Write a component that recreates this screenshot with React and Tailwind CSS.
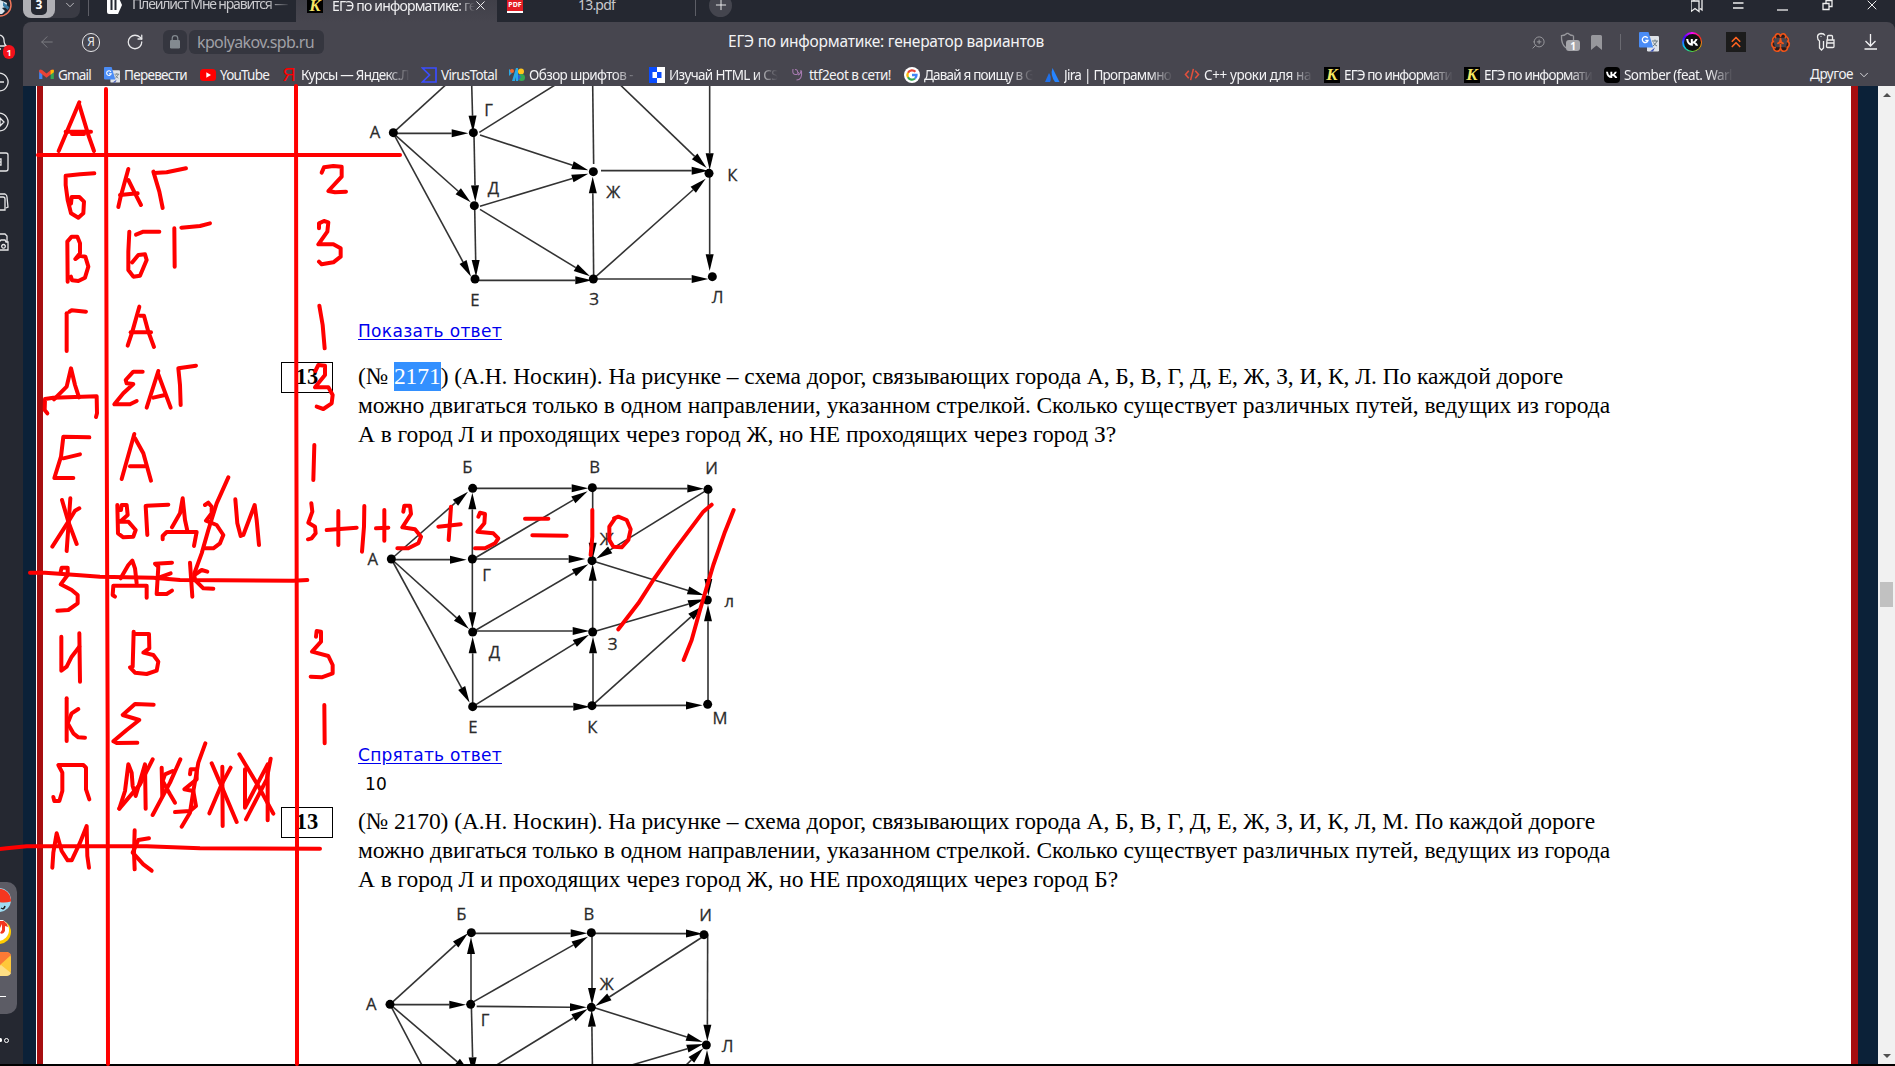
import React, { useLayoutEffect, useRef, useState } from "react";
import { ArrowLeft, RotateCw, ChevronDown, ZoomIn, Bookmark, Brain, ChevronsUp, X, Plus } from "lucide-react";

/* Inline text whose tracking is adjusted so that it spans w pixels. */
function Fit({ w, className = "", children }) {
  const ref = useRef(null);
  const [ls, setLs] = useState(0);
  useLayoutEffect(() => {
    const n = ref.current.textContent.length;
    setLs((w - ref.current.getBoundingClientRect().width) / n);
  }, [w]);
  return (
    <span ref={ref} className={"inline-block whitespace-pre " + className} style={{ letterSpacing: ls + "px" }}>
      {children}
    </span>
  );
}

/* ---------- icons ---------- */
const KIcon = () => (
  <span className="flex h-4 w-4 shrink-0 items-center justify-center bg-black font-['Liberation_Serif',serif] text-[17px] leading-none font-bold text-[#f5e663] italic">
    K
  </span>
);
const Gmail = () => (
  <svg viewBox="0 0 16 12" className="h-[11px] w-[15px]">
    <path d="M0 1.5V11h3.5V5z" fill="#4285f4" />
    <path d="M16 1.5V11h-3.5V5z" fill="#34a853" />
    <path d="M0 1.2Q1 0 3.2 1L8 5l4.800-4Q15 0 16 1.200L16 3.400 8 9.500 0 3.400z" fill="#ea4335" />
    <path d="M12.500 1.200L16 .8V3.600l-3.500 2.600z" fill="#fbbc04" />
  </svg>
);
const Translate = ({ className = "h-4 w-4" }) => (
  <svg viewBox="0 0 20 20" className={className}>
    <rect x="8" y="4" width="12" height="15.5" rx="1.2" fill="#dfe3e8" />
    <path d="M11 19.5h3l2-4z" fill="#3a50b8" />
    <path d="M1 0h8.500l4.700 15.500H1q-1 0-1-1V1q0-1 1-1z" fill="#4a8cf5" />
    <path d="M8.700 6.100A2.900 2.900 0 1 0 9 8.500H6.300" fill="none" stroke="#fff" strokeWidth="1.300" />
    <path d="M13 9h6M16 7.500V9M18 9q-1 3-4 5M14.500 10.500q1 2.500 3.500 3.500" fill="none" stroke="#6b7a80" />
  </svg>
);
const YouTube = () => (
  <svg viewBox="0 0 16 12" className="h-3 w-4">
    <rect width="16" height="12" rx="3.500" fill="#f00" />
    <path d="M6.300 3.300v5.400L11 6z" fill="#fff" />
  </svg>
);
const Virus = () => (
  <svg viewBox="0 0 16 16" className="h-4 w-4" fill="none" stroke="#3b4dff" strokeWidth="1.700">
    <path d="M1.500 1h13.500v14H1.500L8.500 8z" />
  </svg>
);
const Fonts = () => (
  <svg viewBox="0 0 16 13" className="h-[13px] w-4">
    <path d="M0 1l4 3-4 4zM3 13L7 0h2v13H7V9l-1 4z" fill="#29a9e8" />
    <circle cx="3" cy="3" r="2" fill="#f4682e" />
    <circle cx="12" cy="3.500" r="3" fill="#ffc51e" />
    <circle cx="12.500" cy="9.500" r="3.500" fill="#34a853" />
    <path d="M9 6l3 3-3 4z" fill="#2c62d8" />
  </svg>
);
const Stepik = () => (
  <svg viewBox="0 0 16 16" className="h-4 w-4">
    <rect width="8" height="16" fill="#0b4dff" />
    <rect x="8" width="8" height="16" fill="#fff" />
    <rect x="3.500" y="5" width="4.500" height="6" fill="#fff" />
    <rect x="8" y="5" width="4.500" height="6" fill="#0b4dff" />
  </svg>
);
const Ttf = () => (
  <svg viewBox="0 0 16 16" className="h-4 w-4" fill="none" stroke="#a77ab0" strokeWidth="1.100">
    <path d="M4 2Q3 7 6 7.500T9.500 5M6 2.500q3 0 2.500 3M9 8q3-1 3-5M12.500 4q1 9-5 9" />
  </svg>
);
const Google = () => (
  <svg viewBox="0 0 16 16" className="h-4 w-4">
    <circle cx="8" cy="8" r="8" fill="#fff" />
    <g fill="none" strokeWidth="2.300">
      <path d="M11.400 4.800A4.600 4.600 0 0 0 4 5.700" stroke="#ea4335" />
      <path d="M4 5.700a4.600 4.600 0 0 0 0 4.600" stroke="#fbbc04" />
      <path d="M4 10.300a4.600 4.600 0 0 0 7 1.200" stroke="#34a853" />
      <path d="M11 11.500A4.600 4.600 0 0 0 12.500 8H8" stroke="#4285f4" />
    </g>
  </svg>
);
const Jira = () => (
  <svg viewBox="0 0 16 14" className="h-[14px] w-4">
    <path d="M5 5q3 4 1 9H1z" fill="#2070e8" />
    <path d="M8.500 0L15.500 14H11Q6 7 8.500 0z" fill="#2684ff" />
  </svg>
);
const Code = () => (
  <svg viewBox="0 0 16 14" className="h-[13px] w-4" fill="none" stroke="#e2503c" strokeWidth="1.700">
    <path d="M4.500 3L1 7l3.500 4M11.500 3L15 7l-3.500 4M9.500 1l-3 12" />
  </svg>
);
const VkMark = ({ className }) => (
  <svg viewBox="0 0 16 16" className={className}>
    <path d="M2 4.800h2q.3 3.600 2.400 4V4.800h1.900v2.400q1.800-.3 2.500-2.400h2q-.5 2-2.200 3 1.900.9 2.700 3.300h-2.200q-.8-2-2.800-2.300v2.300Q3 11.500 2 4.800z" fill="#fff" />
  </svg>
);
const Vk = () => (
  <span className="flex h-4 w-4 rounded bg-black">
    <VkMark className="h-4 w-4" />
  </span>
);

const BOOKMARKS = [
  { icon: <Gmail />, t: "Gmail", w: 33, box: "w-[66px]" },
  { icon: <Translate />, t: "Перевести", w: 63, box: "w-[96px]" },
  { icon: <YouTube />, t: "YouTube", w: 49, box: "w-[81px]" },
  { icon: <span className="w-4 text-center font-['Liberation_Sans',sans-serif] text-[18px] leading-4 text-[#f00]">Я</span>, t: "Курсы — Яндекс.Л", w: 108, box: "w-[140px]", fade: true },
  { icon: <Virus />, t: "VirusTotal", w: 56, box: "w-[88px]" },
  { icon: <Fonts />, t: "Обзор шрифтов -", w: 104, box: "w-[140px]", fade: true },
  { icon: <Stepik />, t: "Изучай HTML и CS", w: 109, box: "w-[140px]", fade: true },
  { icon: <Ttf />, t: "ttf2eot в сети!", w: 82, box: "w-[115px]" },
  { icon: <Google />, t: "Давай я поищу в G", w: 110, box: "w-[140px]", fade: true },
  { icon: <Jira />, t: "Jira | Программно", w: 107, box: "w-[140px]", fade: true },
  { icon: <Code />, t: "C++ уроки для на", w: 107, box: "w-[140px]", fade: true },
  { icon: <KIcon />, t: "ЕГЭ по информати", w: 108, box: "w-[140px]", fade: true },
  { icon: <KIcon />, t: "ЕГЭ по информати", w: 108, box: "w-[140px]", fade: true },
  { icon: <Vk />, t: "Somber (feat. Warl", w: 108, box: "w-[140px]", fade: true },
];

function TabStrip() {
  return (
    <div className="h-[22px] overflow-hidden bg-[#252831]">
      <div className="-mt-[13px] flex h-9 items-center text-[13px] text-[#c9c9cd]">
        <div className="flex h-[26px] w-[57px] items-center rounded-lg bg-[#3a3b44]">
          <div className="flex h-full w-8 items-center justify-center rounded-lg bg-[#b0b0b5]">
            <span className="flex h-5 w-4 items-center justify-center rounded-[5px] bg-[#252831] text-[12px] leading-none font-bold text-white">3</span>
          </div>
          <ChevronDown className="ml-2 h-3.5 w-3.5" strokeWidth={1.5} />
        </div>
        <div className="ml-2 h-[22px] w-px bg-[#5d5e66]" />
        <svg viewBox="0 0 16 18" className="ml-[18px] h-[18px] w-4">
          <path d="M2 0h9l4 9-4 9H2Q0 18 0 16V2Q0 0 2 0z" fill="#fff" />
          <path d="M4.500 3v11M8.500 3v11" stroke="#252831" strokeWidth="2" />
        </svg>
        <div className="ml-[9px] w-[164px] overflow-hidden [mask-image:linear-gradient(90deg,#000_82%,transparent_97%)]">
          <Fit w={155} className="text-[14px] leading-4">Плейлист Мне нравится —</Fit>
        </div>
        <div className="flex h-9 w-[201px] items-center bg-linear-to-b from-[#3c3c45] to-[#47464f] pl-[11px] text-[14px] text-[#f0f0f2]">
          <KIcon />
          <div className="ml-[9px] w-[143px] overflow-hidden [mask-image:linear-gradient(90deg,#000_88%,transparent_100%)]">
            <Fit w={144} className="leading-4">ЕГЭ по информатике: ге</Fit>
          </div>
          <X className="-ml-0.5 h-[15px] w-[15px]" strokeWidth={1.6} />
        </div>
        <span className="ml-[10px] flex h-4 w-4 items-center justify-center border-b-2 border-white bg-[#e31b23] text-[7px] leading-none font-bold text-white">PDF</span>
        <Fit w={37} className="ml-[55px] text-[14px] leading-4">13.pdf</Fit>
        <div className="ml-[80px] h-[22px] w-px bg-[#5d5e66]" />
        <span className="ml-[13px] flex h-[23px] w-[23px] items-center justify-center rounded-full bg-[#44454e] text-white">
          <Plus className="h-4 w-4" strokeWidth={1.3} />
        </span>
        <div className="ml-auto flex items-center pr-[15px] text-[#eee]">
          <svg viewBox="0 0 16 16" className="mr-[27px] h-4 w-4" fill="none" stroke="currentColor" strokeWidth="1.300">
            <path d="M-1 4h8v10.500L3 11.500l-4 3zM2 4V2h8v11l-2-1.500" transform="translate(1 0)" />
          </svg>
          <svg viewBox="0 0 16 16" className="mr-[28px] h-4 w-4 -translate-x-1" fill="none" stroke="currentColor" strokeWidth="1.300">
            <path d="M3 6h10.500M3 11h10.500" />
          </svg>
          <svg viewBox="0 0 16 16" className="mr-[28px] h-4 w-4 -translate-x-1" fill="none" stroke="currentColor" strokeWidth="1.300">
            <path d="M3 13h11" />
          </svg>
          <svg viewBox="0 0 16 16" className="mr-[26px] h-4 w-4 -translate-x-0.5" fill="none" stroke="currentColor" strokeWidth="1.300">
            <path d="M3 6.500h6v6H3zM6 6.500V3.500h6v6H9" />
          </svg>
          <X className="h-4 w-4" strokeWidth={1.5} />
        </div>
      </div>
    </div>
  );
}

function AddressBar() {
  return (
    <div className="grid h-10 grid-cols-[1fr_auto_1fr] items-center">
      <div className="flex items-center pl-[15px]">
        <ArrowLeft className="h-[18px] w-[18px] text-[#7b7b82]" strokeWidth={1.3} />
        <span className="ml-[26px] flex h-[19px] w-[18px] items-center justify-center rounded-full border-[1.5px] border-[#e8e8ea] text-[12px] leading-none text-[#e8e8ea]">Я</span>
        <RotateCw className="ml-[26px] h-[18px] w-[18px] text-[#e8e8ea]" strokeWidth={1.7} />
        <span className="ml-[19px] flex h-6 w-6 items-center justify-center rounded-md bg-[#35363f]">
          <svg viewBox="0 0 10 14" className="h-[14px] w-[10px]">
            <rect y="5" width="10" height="8.500" rx="1.200" fill="#838a90" />
            <path d="M2.200 6V3.500a2.800 2.800 0 0 1 5.600 0V6" fill="none" stroke="#838a90" strokeWidth="1.200" />
          </svg>
        </span>
        <span className="ml-0.5 flex h-6 w-[135px] items-center rounded-md bg-[#35363f] pl-2 text-[16px] text-[#a0a0a6]">
          <Fit w={117}>kpolyakov.spb.ru</Fit>
        </span>
      </div>
      <div className="-ml-[146px] text-[15.500px] text-[#f3f3f5]">
        <Fit w={316}>ЕГЭ по информатике: генератор вариантов</Fit>
      </div>
      <div className="flex items-center justify-end pr-[15px] text-[#97979c]">
        <ZoomIn className="mr-[14px] h-[15px] w-[15px] -scale-x-100" strokeWidth={1.6} />
        <span className="relative mr-[11px] flex h-5 w-5 items-start">
          <svg viewBox="0 0 16 20" className="h-5 w-4" fill="none" stroke="currentColor" strokeWidth="1.300">
            <path d="M7.500 1Q10 3.500 13.500 3.700M7.500 1Q5 3.500 1.500 3.700 1 12 6 16M13.500 3.700v5" />
          </svg>
          <span className="absolute top-[8px] left-[6px] flex h-[11px] w-[14px] items-center justify-center rounded-[3px] bg-[#a5a5aa] text-[10px] leading-none font-bold text-white">1</span>
        </span>
        <svg viewBox="0 0 11 15" className="mr-px h-[15px] w-[11px]">
          <path d="M1.500 0h8Q11 0 11 1.500V15L5.500 10.500 0 15V1.500Q0 0 1.500 0z" fill="#97979c" />
        </svg>
        <span className="ml-[17px] h-4 w-px bg-[#6a6a71]" />
        <Translate className="ml-[18px] h-5 w-5" />
        <span className="ml-[23px] h-[20px] w-[20px] rounded-full bg-[conic-gradient(#f0f,#f22,#fb0,#4d4,#0cf,#40f,#f0f)] p-[1.5px]">
          <span className="flex h-full w-full rounded-full bg-[#111]">
            <VkMark className="h-[17px] w-[17px]" />
          </span>
        </span>
        <span className="ml-6 flex h-5 w-5 items-center justify-center bg-[#1c1c1c]">
          <ChevronsUp className="h-[18px] w-[18px] text-[#ff6320]" strokeWidth={2.2} />
        </span>
        <Brain className="ml-6 h-[21px] w-[21px] fill-[#2a1a18] text-[#f0551a]" strokeWidth={1.9} />
        <svg viewBox="0 0 20 20" className="ml-[25px] h-5 w-5 text-[#eee]" fill="none" stroke="currentColor" strokeWidth="1.300">
          <path d="M9 3.500Q8 1.500 5 1.500 1.500 2 1.500 5t2 4v7l2 2 2-2V9M5 4.200v.8M11 8h7v6.500q0 1-1 1h-5.500q-1 0-1-1zM11.500 8V4.500q0-1 1-1h3q1 0 1 1V8M10.500 11h7.500" />
        </svg>
        <svg viewBox="0 0 14 16" className="ml-[28px] mr-0.5 h-4 w-[14px] text-[#f3f3f5]" fill="none" stroke="currentColor" strokeWidth="1.300">
          <path d="M6.500 0v11.500M1.500 7l5 5 5-5M.5 15h12.500" />
        </svg>
      </div>
    </div>
  );
}

function Bookmarks() {
  return (
    <div className="flex h-6 items-center pt-px pl-[15px] text-[13.500px] text-[#f3f3f5]">
      {BOOKMARKS.map((b, i) => (
        <div key={i} className={"flex shrink-0 items-center " + b.box}>
          <span className="flex w-4 shrink-0 justify-center">{b.icon}</span>
          <div className={"ml-1 leading-5 " + (b.fade ? "w-[109px] overflow-hidden [mask-image:linear-gradient(90deg,#000_78%,transparent_100%)]" : "")}>
            <Fit w={b.w}>{b.t}</Fit>
          </div>
        </div>
      ))}
      <div className="ml-auto flex items-center pr-[24px]">
        <Fit w={43}>Другое</Fit>
        <ChevronDown className="ml-1 h-[14px] w-[14px]" strokeWidth={1.4} />
      </div>
    </div>
  );
}

/* ---------- left browser rail ---------- */
const RAIL = [
  "M3 14Q5 13 5 8a5 5 0 0 1 10 0q0 5 3 6zM8 17h4",
  "M10 1a9 9 0 1 0 .01 0M6 10h9",
  "M10 1a9 9 0 1 0 .01 0M11 6l4 4-4 4z",
  "M2 1h15q2 0 2 2v14q0 2-2 2H2M9 7h3v6H9M12 10H9",
  "M3 5h11q2 0 2 2v11H3M5 2l11 0q2 1 2 3l1 10-2 1",
  "M2 2h14l2 2v6M8 9h3l1-1h4l1 2h2v8H8M14.500 12.500a1.800 1.800 0 1 0 .01 0",
];
function Rail() {
  return (
    <aside className="flex w-[23px] shrink-0 flex-col overflow-hidden bg-[#252831]">
      <svg viewBox="0 0 24 24" className="-mt-[7px] -ml-3 h-6 w-6">
        <circle cx="12" cy="12" r="11" fill="#1d2733" stroke="#f2765a" strokeWidth="1.500" />
        <path d="M12 7l7 3-1 4-4 1 3 3-3 3h-3z" fill="#d9e6ee" />
        <path d="M15 9l6 5-1 3-5-4z" fill="#3d7fa8" />
      </svg>
      <div className="mt-[15px] -ml-[11px] flex flex-col gap-5">
        {RAIL.map((d, i) => (
          <span key={i} className="relative h-5 w-5">
            <svg viewBox="0 0 20 20" className="h-5 w-5" fill="none" stroke="#e6e6e8" strokeWidth="1.300">
              <path d={d} />
            </svg>
            {i === 0 && (
              <span className="absolute top-[13px] left-[14px] flex h-[14px] w-[12px] items-center justify-center rounded-full bg-[#f4111b] text-[9px] leading-none font-bold text-white">1</span>
            )}
          </span>
        ))}
      </div>
      <div className="mt-auto h-[132px] w-[17px] overflow-hidden rounded-r-[10px] bg-[#5c5c65] pt-1.5">
        <div className="-ml-[13px] flex w-6 flex-col items-center gap-2">
          <svg viewBox="0 0 24 24" className="h-6 w-6">
            <circle cx="12" cy="12" r="12" fill="#9fdcf2" />
            <path d="M0 12A12 12 0 0 1 24 13.500Q18 15 12 14z" fill="#f5371f" />
            <path d="M14 20q3 2 4-2" stroke="#222" strokeWidth="1.500" fill="none" />
          </svg>
          <svg viewBox="0 0 24 24" className="h-6 w-6">
            <circle cx="12" cy="12" r="12" fill="#ffcc00" />
            <circle cx="11" cy="10" r="11" fill="#fff" />
            <path d="M8 1h9l3 3 1 3-3-1v5q-2 4-5 2l2-3V4l-2 4z" fill="#f5371f" />
          </svg>
          <svg viewBox="0 0 24 24" className="h-6 w-6">
            <rect width="24" height="24" rx="5" fill="#ffc83a" />
            <path d="M0 0h19q4 0 5 3L12 14 0 6z" fill="#fb7a35" />
            <path d="M14 13l10 8q-1 3-5 3H0z" fill="#ffdf85" />
          </svg>
          <span className="mt-[12px] mr-[5px] h-px w-3 self-end bg-white" />
        </div>
      </div>
      <div className="mt-[23px] mb-[21px] flex h-[6px] items-center gap-0.5 pl-px">
        <span className="-ml-0.5 h-[4px] w-[3px] rounded-full bg-white" />
        <span className="h-[5px] w-[5px] rounded-full border border-white" />
      </div>
    </aside>
  );
}

/* ---------- road graphs; figure units are thirds of a pixel ---------- */
function Edge({ x1, y1, x2, y2, plain }) {
  const len = Math.hypot(x2 - x1, y2 - y1);
  const ux = (x2 - x1) / len;
  const uy = (y2 - y1) / len;
  const bx = x2 - ux * 50;
  const by = y2 - uy * 50;
  return (
    <g>
      <line x1={x1} y1={y1} x2={plain ? x2 : bx} y2={plain ? y2 : by} stroke="#333" strokeWidth="4.8" />
      {!plain && <polygon points={`${x2},${y2} ${bx - uy * 12},${by + ux * 12} ${bx + uy * 12},${by - ux * 12}`} fill="#000" />}
    </g>
  );
}
function Graph({ viewBox, className, nodes, edges, labels }) {
  return (
    <svg viewBox={viewBox} className={"block w-[402px] " + className}>
      {edges.map(([x1, y1, x2, y2, plain], i) => (
        <Edge key={i} x1={x1} y1={y1} x2={x2} y2={y2} plain={plain} />
      ))}
      {nodes.map(([x, y], i) => (
        <circle key={i} cx={x} cy={y} r="13.5" fill="#000" />
      ))}
      {labels.map(([t, x, y], i) => (
        <text key={i} x={x} y={y} textAnchor="middle" fill="#2b2b2b" stroke="#2b2b2b" strokeWidth="0.8" className="font-['Open_Sans',sans-serif] text-[50px]">
          {t}
        </text>
      ))}
    </svg>
  );
}
const G1 = {
  nodes: [[160, 158], [400, 158], [403, 377], [405, 597], [760, 597], [760, 275], [1107, 280], [1117, 590]],
  edges: [
    [160, 158, 320, 12, 1], [395, 10, 399, 157], [160, 160, 385, 160], [160, 160, 392, 367], [160, 160, 393, 590], [402, 165, 406, 366],
    [404, 380, 408, 590], [418, 157, 650, 12, 1], [420, 165, 745, 271], [420, 379, 745, 281], [420, 388, 750, 589], [415, 601, 756, 601],
    [761, 590, 758, 290], [758, 10, 761, 252, 1], [783, 272, 1105, 272], [838, 12, 1100, 264], [1109, 10, 1109, 270], [1109, 285, 1109, 573],
    [765, 592, 1097, 296], [770, 597, 1105, 597],
  ],
  labels: [["А", 105, 175], ["Г", 446, 107], ["Д", 460, 342], ["Ж", 820, 353], ["К", 1177, 302], ["Е", 405, 677], ["З", 762, 674], ["Л", 1133, 668]],
};
const G2 = {
  nodes: [[154, 357], [398, 145], [757, 143], [1104, 148], [397, 357], [756, 362], [398, 576], [758, 576], [1102, 480], [398, 800], [756, 797], [1103, 793]],
  edges: [
    [154, 357, 384, 155], [154, 359, 380, 359], [154, 357, 387, 567], [154, 357, 389, 788], [398, 145, 745, 145], [757, 145, 1092, 146],
    [397, 357, 397, 158], [397, 357, 397, 567], [400, 357, 743, 154], [397, 357, 736, 357], [398, 576, 745, 373], [398, 573, 748, 573],
    [398, 800, 398, 590], [398, 800, 747, 584], [398, 800, 750, 800], [759, 797, 759, 590], [758, 576, 758, 372], [758, 143, 758, 358],
    [1104, 148, 768, 356], [1105, 148, 1105, 467], [756, 362, 1092, 466], [758, 576, 1094, 478], [756, 797, 1090, 497], [756, 797, 1088, 796],
    [1104, 793, 1104, 494],
  ],
  labels: [["Б", 382, 98], ["В", 764, 98], ["И", 1115, 101], ["А", 98, 375], ["Г", 440, 423], ["Ж", 800, 315], ["л", 1168, 502], ["Д", 463, 654], ["З", 818, 630], ["Е", 399, 878], ["К", 757, 878], ["М", 1140, 851]],
};
const G3 = {
  nodes: [[150, 613], [394, 398], [754, 398], [1092, 404], [392, 613], [754, 622], [1099, 735]],
  edges: [
    [150, 613, 384, 400], [150, 614, 378, 614], [150, 613, 390, 818], [150, 613, 285, 870, 1], [394, 400, 742, 400], [754, 400, 1088, 401],
    [393, 613, 393, 412], [394, 613, 399, 822], [392, 610, 744, 410], [410, 619, 740, 622], [400, 838, 743, 627], [756, 398, 756, 614],
    [1092, 408, 766, 618], [758, 850, 755, 630], [1103, 404, 1102, 724], [754, 620, 1088, 726], [770, 826, 1090, 732], [990, 842, 1090, 745],
    [1101, 860, 1101, 750],
  ],
  labels: [["Б", 364, 359], ["В", 747, 359], ["И", 1097, 362], ["А", 94, 631], ["Г", 435, 679], ["Ж", 800, 569], ["Л", 1163, 756]],
};

function Problem({ className, children }) {
  return (
    <div className={"flex gap-[25px] pl-[238px] " + className}>
      <div className="flex h-[31px] w-[52px] shrink-0 items-center justify-center border border-black text-[22.500px] leading-none font-bold">13</div>
      <div className="h-[88px] text-[23.500px] leading-[29.2px]">{children}</div>
    </div>
  );
}

function Page() {
  return (
    <main className="flex min-h-0 flex-1 bg-[#0b2138] pl-[13px]">
      <article className="flex-1 overflow-hidden border-r-[7px] border-l border-r-[#a60e10] border-l-white bg-white font-['Liberation_Serif',serif] text-black">
        <div className="h-full border-l-[6px] border-l-[#a60e10]">
          <Graph {...G1} viewBox="54 18 1206 690" className="ml-[315px] h-[230px]" />
          <div className="flex h-[46px] pt-[1px] pl-[315px] font-['DejaVu_Sans',sans-serif] text-[17px] leading-[29px] text-[#0000ee]">
            <Fit w={144} className="underline underline-offset-2">Показать ответ</Fit>
          </div>
          <Problem className="h-[94px]">
            <div><Fit w={1205}>(№ <span className="inline-block h-[29px] bg-[#3390ff] text-white">2171</span>) (А.Н. Носкин). На рисунке – схема дорог, связывающих города А, Б, В, Г, Д, Е, Ж, З, И, К, Л. По каждой дороге</Fit></div>
            <div><Fit w={1252}>можно двигаться только в одном направлении, указанном стрелкой. Сколько существует различных путей, ведущих из города</Fit></div>
            <div><Fit w={758}>А в город Л и проходящих через город Ж, но НЕ проходящих через город З?</Fit></div>
          </Problem>
          <Graph {...G2} viewBox="54 48 1206 852" className="ml-[315px] h-[284px]" />
          <div className="h-[67px] pt-px pl-[315px] font-['DejaVu_Sans',sans-serif] text-[17px] leading-[29px]">
            <div className="h-[29px]"><Fit w={144} className="text-[#0000ee] underline underline-offset-2">Спрятать ответ</Fit></div>
            <div className="h-[29px] pl-[7px]"><Fit w={22}>10</Fit></div>
          </div>
          <Problem className="h-[97px]">
            <div><Fit w={1237}>(№ 2170) (А.Н. Носкин). На рисунке – схема дорог, связывающих города А, Б, В, Г, Д, Е, Ж, З, И, К, Л, М. По каждой дороге</Fit></div>
            <div><Fit w={1252}>можно двигаться только в одном направлении, указанном стрелкой. Сколько существует различных путей, ведущих из города</Fit></div>
            <div><Fit w={760}>А в город Л и проходящих через город Ж, но НЕ проходящих через город Б?</Fit></div>
          </Problem>
          <Graph {...G3} viewBox="54 312 1206 480" className="ml-[315px] h-[160px]" />
        </div>
      </article>
      <div className="w-5" />
      <div className="flex w-[17px] flex-col items-center bg-[#f1f1f1] pt-[7px] pb-1.5">
        <svg viewBox="0 0 8 4" className="h-1 w-2"><path d="M0 4l4-4 4 4z" fill="#505050" /></svg>
        <div className="mt-[485px] h-[25px] w-[13px] bg-[#c1c1c1]" />
        <svg viewBox="0 0 8 4" className="mt-auto h-1 w-2"><path d="M0 0l4 4 4-4z" fill="#505050" /></svg>
      </div>
    </main>
  );
}

/* ---------- red pen strokes, grouped by canvas region; units are thirds of a pixel ---------- */
const INK = [
  {
    at: "translate(0 85) scale(.33333)",
    lines: [
      "318,12 320,975 323,1960 324,2937", "888,3 889,975 891,1960 891,2937", "114,210 1200,210",
      "176,198 238,52", "238,60 250,100 265,150 282,198", "197,140 273,140", "216,147 252,147",
      "283,265 240,268 197,272 197,300 203,345 213,385 235,398 250,385 252,350 238,336 215,336 213,356",
      "355,366 362,335 385,252", "385,285 405,325 423,360", "360,330 413,325", "558,250 500,262 462,264", "460,260 478,320 488,369",
      "203,590 202,470 215,455 232,455 240,475 240,505 226,522 240,512 256,515 265,545 255,578 235,588 216,586 213,575",
      "388,440 385,500 385,555 400,575 420,572 440,525 435,508 415,510 397,532", "408,449 430,440 478,440", "523,430 524,545", "544,428 600,423 630,415",
      "200,685 200,798", "208,680 215,676 258,680",
      "383,782 397,740 418,665", "420,692 432,692 445,740 462,786", "392,742 453,742",
      "162,943 200,905 213,850 225,900 237,937", "142,985 134,975 135,942 160,938 290,934 291,985 288,996",
      "428,860 400,860 377,885 380,895 400,897 370,925 343,958 390,958 410,948", "440,968 475,858", "475,868 512,968", "460,938 495,930", "542,960 540,900 535,850 588,842",
      "965,263 972,247 1000,243 1025,245 1025,275 985,318 1005,322 1038,320",
      "957,430 957,415 972,408 985,412 982,440 955,478 1000,478 1022,490 1022,515 1000,532 965,538 957,530",
      "958,662 968,720 974,790",
      "946,858 955,840 975,842 975,870 945,907 985,907 998,930 995,955 970,972 950,965",
    ],
  },
  {
    at: "translate(0 410) scale(.33333)",
    lines: [
      "268,82 190,80 183,140 163,204 220,204", "190,145 240,133",
      "365,207 403,72", "405,85 430,130 453,212", "390,169 435,169", "943,105 940,210",
      "186,270 205,335 230,402", "211,265 200,423", "238,295 225,302 205,335 157,410",
      "352,285 354,370 370,382 400,380 407,360 385,335 360,335 383,315 380,285 365,285 363,300",
      "437,288 442,375", "440,287 505,284", "516,352 540,310 548,265 555,330 562,362", "488,388 488,378 500,366 590,366 582,408",
      "615,285 625,278 635,290 635,310 618,332 650,345 670,375 660,400 640,415 615,415", "685,202 650,280 625,360 605,430 583,490",
      "706,268 712,340 722,378 730,375 764,285 770,330 777,405",
      "934,280 937,305 925,338 945,350 947,370 935,385 924,388",
      "980,360 1070,353", "1015,303 1015,405", "1093,288 1092,350 1086,425", "1128,355 1165,353", "1153,300 1153,392",
      "90,488 135,488 240,496 300,500 460,503 540,510 880,512 922,510",
      "182,485 185,473 203,473 203,495 182,523 215,540 233,555 233,580 205,600 172,602",
      "362,505 385,465 397,452 405,475 410,520", "345,560 338,555 340,527 440,527 440,563",
      "516,458 465,461 475,470 470,552 500,552 516,542", "470,505 512,490", "570,458 577,560", "622,485 605,480 583,495 585,510 610,535 640,536",
      "184,680 184,782 200,770 215,740 238,710", "238,670 240,815",
      "401,665 398,770 390,772 405,788 440,792 470,782 475,755 460,735 430,728 448,715 447,672 405,672",
      "948,680 950,663 963,665 963,695 936,725 985,738 998,765 998,790 965,802 932,800",
      "200,865 200,993", "235,897 215,910 203,940 220,970 235,982 255,983", "461,884 405,882 368,915 418,930 380,960 340,994 350,999 412,998", "973,885 974,1000",
    ],
  },
  {
    at: "translate(0 736) scale(.33333)",
    lines: [
      "160,183 163,195 178,195 187,165 187,110 175,87 250,87 258,95 258,160 268,190",
      "358,218 375,165 385,85 395,110 398,150 407,180 435,85 437,218", "458,70 420,145 358,218",
      "485,95 487,180", "518,105 495,115 488,135 510,175 525,200", "541,70 510,140 458,237",
      "570,115 572,100 590,100 590,130 553,160 580,165 588,210 570,225 525,228", "616,22 595,80 580,165 570,230 545,272",
      "635,82 660,140 710,258", "667,92 668,270", "692,95 665,145 628,232",
      "735,100 735,215 803,85 803,253", "718,55 775,150 820,233", "812,68 800,130 738,250",
      "157,395 160,350 170,292 185,345 203,373 215,373 240,320 260,270 262,360 267,395",
      "404,283 402,350 404,400", "447,307 415,312 398,350 430,385 455,404", "-6,340 20,337 80,331 440,331 600,337 960,338",
    ],
  },
  {
    at: "translate(340 440) scale(.33333)",
    lines: [
      "190,215 193,197 210,197 213,222 187,262 225,268 243,290 235,310 205,325 172,325", "295,260 362,253", "333,200 326,300",
      "415,230 420,218 435,222 433,250 412,275 460,280 475,295 465,310 435,325 405,325",
      "555,236 625,236", "577,286 680,287", "757,210 757,290 752,345",
      "822,235 835,230 860,240 872,268 865,300 845,322 820,320 808,300 808,260 825,235",
      "1115,194 1090,215 1000,335 940,420 895,490 835,568", "1181,210 1155,275 1120,375 1080,510 1055,600 1031,660",
    ],
  },
];

function Ink() {
  return (
    <svg viewBox="0 0 1895 1066" className="pointer-events-none absolute inset-0 h-[1066px] w-[1895px]">
      {INK.map((g, i) => (
        <g key={i} transform={g.at} fill="none" stroke="#ff0000" strokeWidth="12" strokeLinecap="round" strokeLinejoin="round">
          {g.lines.map((p, j) => (
            <polyline key={j} points={p} />
          ))}
        </g>
      ))}
    </svg>
  );
}

export default function App() {
  return (
    <div className="relative flex h-[1066px] w-[1895px] flex-col overflow-hidden bg-black pb-[2px] font-['Noto_Sans',sans-serif]">
      <div className="flex min-h-0 flex-1">
        <Rail />
        <div className="flex min-w-0 flex-1 flex-col bg-[#252831]">
          <TabStrip />
          <header className="h-16 shrink-0 rounded-t-lg bg-[#47464f]">
            <AddressBar />
            <Bookmarks />
          </header>
          <Page />
        </div>
      </div>
      <Ink />
    </div>
  );
}
